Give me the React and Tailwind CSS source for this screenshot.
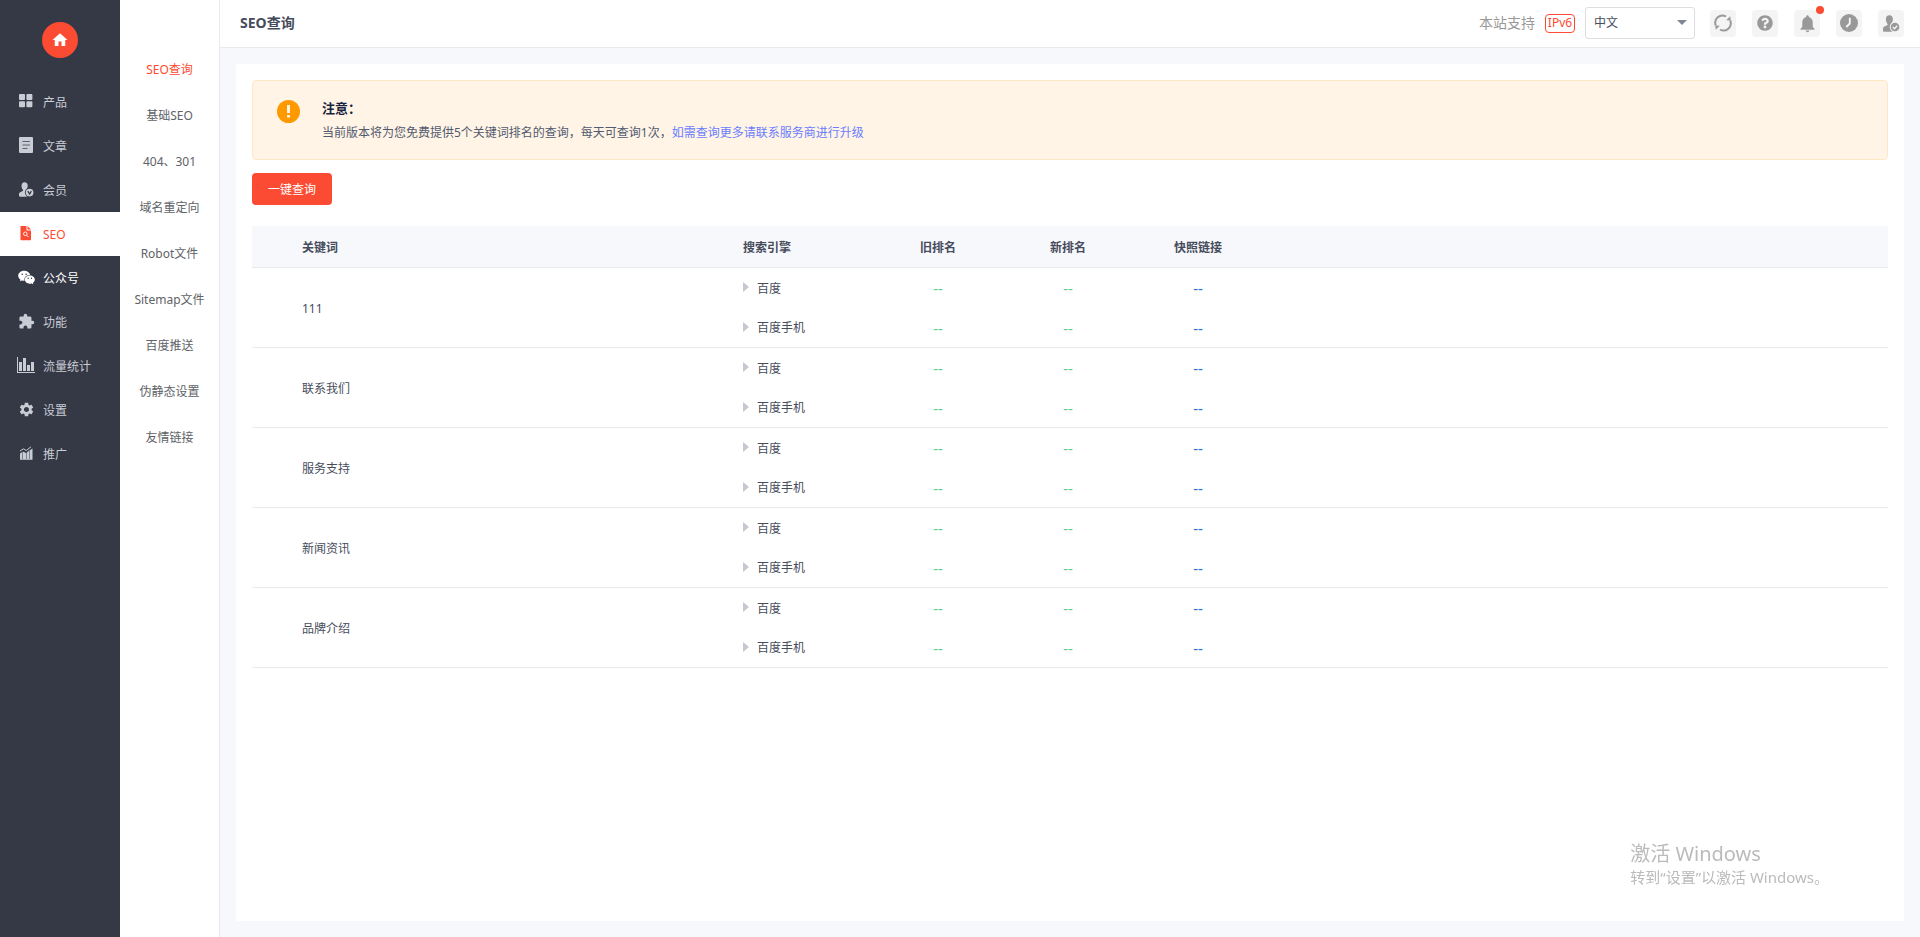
import { MdExtension, MdHome, MdNotifications, MdSettings } from 'react-icons/md'
import { FaQuestionCircle } from 'react-icons/fa'
import { AiFillWechat } from 'react-icons/ai'

function GridIcon() {
  return (
    <svg width="14" height="14" viewBox="0 0 14 14" fill="currentColor">
      <rect x="0" y="0" width="6" height="6" rx="1" />
      <rect x="7.4" y="0" width="6" height="6" rx="1" />
      <rect x="0" y="7.2" width="6" height="6" rx="1" />
      <rect x="7.4" y="7.2" width="6" height="6" rx="1" />
    </svg>
  )
}

function ArticleIcon() {
  return (
    <svg width="14" height="16" viewBox="0 0 14 16">
      <rect width="14" height="16" rx="1" fill="currentColor" />
      <path d="M3.5 4.5h7.5M3.5 8h7.5M3.5 11.5h5" stroke="#353845" strokeWidth="1.1" opacity="0.7" />
    </svg>
  )
}

// Person silhouette with a round badge cut out of the lower right corner.
function PersonIcon({ size, cut, mark }) {
  return (
    <svg width={size} height={size} viewBox="0 0 16 16">
      <path
        d="M6 0.3C8.1 0.3 9.3 1.8 9.3 4c0 1.5-.6 2.8-1.3 3.6-.3.4-.2 1 .2 1.3l3.3 1.6v5.2H1.2C.5 15.700 0 15.200 0 14.500v-1.600c0-1 .5-1.600 1.400-2L3.800 9.700c.6-.3.7-1 .3-1.500C3.300 7.300 2.700 5.700 2.700 4 2.700 1.800 3.900.3 6 .3z"
        fill="currentColor"
      />
      <circle cx="11.300" cy="11.300" r="5" fill={cut} />
      <circle cx="11.300" cy="11.300" r="4.100" fill="currentColor" />
      <path d={mark} fill="none" stroke={cut} strokeWidth="1.300" />
    </svg>
  )
}

function SeoIcon() {
  return (
    <svg width="12" height="16" viewBox="0 0 12 16">
      <path d="M1 1h5.500v4.500H11V14.500a.8.8 0 0 1-.8.8H1.300a.8.8 0 0 1-.8-.8V1.500A.5.5 0 0 1 1 1z" fill="currentColor" />
      <path d="M7.500 1 11 4.500H7.500z" fill="currentColor" />
      <circle cx="5.300" cy="8.800" r="1.800" fill="none" stroke="#fff" strokeWidth="0.9" />
      <path d="M6.600 10.200l1.900 1.900" stroke="#fff" strokeWidth="1" />
    </svg>
  )
}

function StatsIcon() {
  return (
    <svg width="18" height="16" viewBox="0 0 18 16" fill="currentColor">
      <path d="M0 0h1v15h17v1H0zM2 5h3v9H2zM6 1h3v13H6zM10 8h3v6h-3zM14 5h3v9h-3z" />
    </svg>
  )
}

function PromoteIcon() {
  return (
    <svg width="13" height="14" viewBox="0 0 13 14" fill="currentColor">
      <path d="M0 7.500l2.500-1.800V13H0zM3 5.500l3 1.500V13H3zM6.500 7 9 4.500V13H6.500zM9.500 4.500l3-2V13h-3zM0 13.200h12.500v.8H0z" />
      <path d="M0 5 3.500 2.800 6.300 4.500 11 .8" fill="none" stroke="currentColor" strokeWidth="1" />
    </svg>
  )
}

function RefreshIcon() {
  return (
    <svg width="18" height="18" viewBox="0 0 18 18">
      <g fill="none" stroke="currentColor" strokeWidth="2">
        <path d="M1.800 11.500A7.200 7.200 0 0 1 12 2.500" />
        <path d="M16.200 6.500A7.200 7.200 0 0 1 6 15.500" />
      </g>
      <path d="M12.200 6.300l4.600.2-.6-4.300zM5.800 11.700l-4.600-.2.6 4.300z" fill="currentColor" />
    </svg>
  )
}

function ClockIcon() {
  return (
    <svg width="18" height="18" viewBox="0 0 18 18">
      <circle cx="9" cy="9" r="9" fill="currentColor" />
      <path d="M9.800 3.800v5.700L6.300 13" fill="none" stroke="#f4f4f4" strokeWidth="1.900" />
    </svg>
  )
}

const MENU = [
  { label: '产品', icon: <GridIcon /> },
  { label: '文章', icon: <ArticleIcon /> },
  { label: '会员', icon: <PersonIcon size={15} cut="#353845" mark="M9.400 9.700l1.900 3.200 1.900-3.200" /> },
  { label: 'SEO', icon: <SeoIcon />, state: 'active' },
  { label: '公众号', icon: <AiFillWechat size={19} />, state: 'bright' },
  { label: '功能', icon: <MdExtension size={17} /> },
  { label: '流量统计', icon: <StatsIcon /> },
  { label: '设置', icon: <MdSettings size={17} /> },
  { label: '推广', icon: <PromoteIcon /> },
]

const MENU_COLORS = {
  active: 'bg-white text-[#fb4b32]',
  bright: 'text-white',
  normal: 'text-[#c8ccd4]',
}

const SUBMENU = ['SEO查询', '基础SEO', '404、301', '域名重定向', 'Robot文件', 'Sitemap文件', '百度推送', '伪静态设置', '友情链接']

const KEYWORDS = ['111', '联系我们', '服务支持', '新闻资讯', '品牌介绍']
const ENGINES = ['百度', '百度手机']

function Sidebar() {
  return (
    <nav className="w-[120px] shrink-0 bg-[#353845]">
      <div className="flex h-20 justify-center pt-[22px]">
        <a href="#home" aria-label="首页" className="flex size-9 items-center justify-center rounded-full bg-[#fb4b32] text-white">
          <MdHome size={18} />
        </a>
      </div>
      {MENU.map((m) => (
        <a key={m.label} href="#menu" className={`flex h-11 items-center gap-[7px] pl-4 ${MENU_COLORS[m.state || 'normal']}`}>
          <span className="flex w-5 justify-center pb-0.5">{m.icon}</span>
          <span className="pt-0.5">{m.label}</span>
        </a>
      ))}
    </nav>
  )
}

function SubMenu() {
  return (
    <nav className="w-[100px] shrink-0 border-r border-[#e8e9eb] bg-white pt-[47px]">
      {SUBMENU.map((label, i) => (
        <a
          key={label}
          href="#submenu"
          className={`flex h-[46px] items-center justify-center ${i === 0 ? 'text-[#fb4b32]' : 'text-[#606266]'}`}
        >
          {label}
        </a>
      ))}
    </nav>
  )
}

function ToolButton({ label, children }) {
  return (
    <button aria-label={label} className="relative flex h-[27px] w-[26px] items-center justify-center rounded bg-[#f4f4f4] text-[#999]">
      {children}
    </button>
  )
}

function Header() {
  return (
    <header className="flex h-12 shrink-0 items-center border-b border-[#ebebee] bg-white pr-4 pb-px pl-5">
      <h1 className="text-sm font-bold text-[#464c5b]">SEO查询</h1>
      <span className="ml-auto text-sm text-[#999]">本站支持</span>
      <span className="ml-[10px] flex h-[19px] w-[30px] items-center justify-center rounded border border-[#fb4b32] text-[#fb4b32]">
        IPv6
      </span>
      <div className="relative ml-[10px]">
        <select aria-label="语言" className="h-8 w-[110px] appearance-none rounded-[3px] border border-[#dcdee2] bg-white pl-2 text-[#464c5b]">
          <option>中文</option>
        </select>
        <svg className="pointer-events-none absolute top-[13px] right-2" width="10" height="5" viewBox="0 0 10 5">
          <path d="M0 0h10L5 5z" fill="#808695" />
        </svg>
      </div>
      <div className="ml-[15px] flex gap-4">
        <ToolButton label="刷新"><RefreshIcon /></ToolButton>
        <ToolButton label="帮助"><FaQuestionCircle size={16} /></ToolButton>
        <ToolButton label="通知">
          <MdNotifications size={21} />
          <span className="absolute -top-1 -right-1 size-2 rounded-full bg-[#fb4b32]" />
        </ToolButton>
        <ToolButton label="历史"><ClockIcon /></ToolButton>
        <ToolButton label="账户">
          <PersonIcon size={17} cut="#f4f4f4" mark="M9.200 11.300l1.600 1.600 2.600-2.800" />
        </ToolButton>
      </div>
    </header>
  )
}

function Notice() {
  return (
    <section className="flex h-20 items-start rounded border border-[#ffe7c3] bg-[#fff4e6] pt-[17px] pl-6">
      <svg className="mt-0.5 shrink-0" width="23" height="23" viewBox="0 0 23 23">
        <circle cx="11.500" cy="11.500" r="11.500" fill="#ff9900" />
        <path d="M10 5h3v8h-3zM10 15h3v2.500h-3z" fill="#fff4e6" />
      </svg>
      <div className="ml-[22px]">
        <h2 className="text-[13px] leading-5 font-bold text-[#17233d]">注意：</h2>
        <p className="mt-[5px] leading-5 text-[#515a6e]">
          当前版本将为您免费提供5个关键词排名的查询，每天可查询1次，
          <a href="#upgrade" className="text-[#6a7dfe]">如需查询更多请联系服务商进行升级</a>
        </p>
      </div>
    </section>
  )
}

function RankTable() {
  return (
    <table className="mt-[21px] w-full table-fixed text-[#464c5b]">
      <colgroup>
        <col className="w-[491px]" />
        <col className="w-[130px]" />
        <col className="w-[130px]" />
        <col className="w-[130px]" />
        <col className="w-[130px]" />
        <col />
      </colgroup>
      <thead>
        <tr className="h-[41px] border-b border-[#e8eaec] bg-[#f6f8fc]">
          <th className="pt-[3px] pl-[50px] text-left">关键词</th>
          <th className="pt-[3px] text-left">搜索引擎</th>
          <th className="pt-[3px]">旧排名</th>
          <th className="pt-[3px]">新排名</th>
          <th className="pt-[3px]">快照链接</th>
          <th />
        </tr>
      </thead>
      {KEYWORDS.map((k) => (
        <tbody key={k} className="border-b border-[#e8eaec]">
          {ENGINES.map((e, i) => (
            <tr key={e} className="h-10">
              {i === 0 && <td rowSpan={2} className="pt-1 pl-[50px]">{k}</td>}
              <td>
                <span className="flex items-center gap-2">
                  <svg width="6" height="10" viewBox="0 0 6 10">
                    <path d="M0 0l6 5-6 5z" fill="#c5c8ce" />
                  </svg>
                  <span className="pt-[3px]">{e}</span>
                </span>
              </td>
              <td className="pt-0.5 text-center text-[15px] text-[#5cc98a]">--</td>
              <td className="pt-0.5 text-center text-[15px] text-[#5cc98a]">--</td>
              <td className="pt-0.5 text-center text-[15px] text-[#1872d0]">--</td>
              <td />
            </tr>
          ))}
        </tbody>
      ))}
    </table>
  )
}

export default function App() {
  return (
    <div className="flex min-h-screen bg-[#f6f8fc] font-['Noto_Sans','Noto_Sans_CJK_SC',sans-serif] text-xs">
      <Sidebar />
      <SubMenu />
      <div className="flex min-w-0 flex-1 flex-col">
        <Header />
        <main className="m-4 flex-1 bg-white p-4">
          <Notice />
          <button className="mt-[13px] h-8 rounded bg-[#fb4b32] px-4 pt-0.5 text-white">一键查询</button>
          <RankTable />
        </main>
      </div>
      <div className="pointer-events-none fixed right-[91px] bottom-[50px] text-[#bbb]">
        <p className="text-xl leading-[26px]">激活 Windows</p>
        <p className="text-[15px] leading-5">转到“设置”以激活 Windows。</p>
      </div>
    </div>
  )
}
